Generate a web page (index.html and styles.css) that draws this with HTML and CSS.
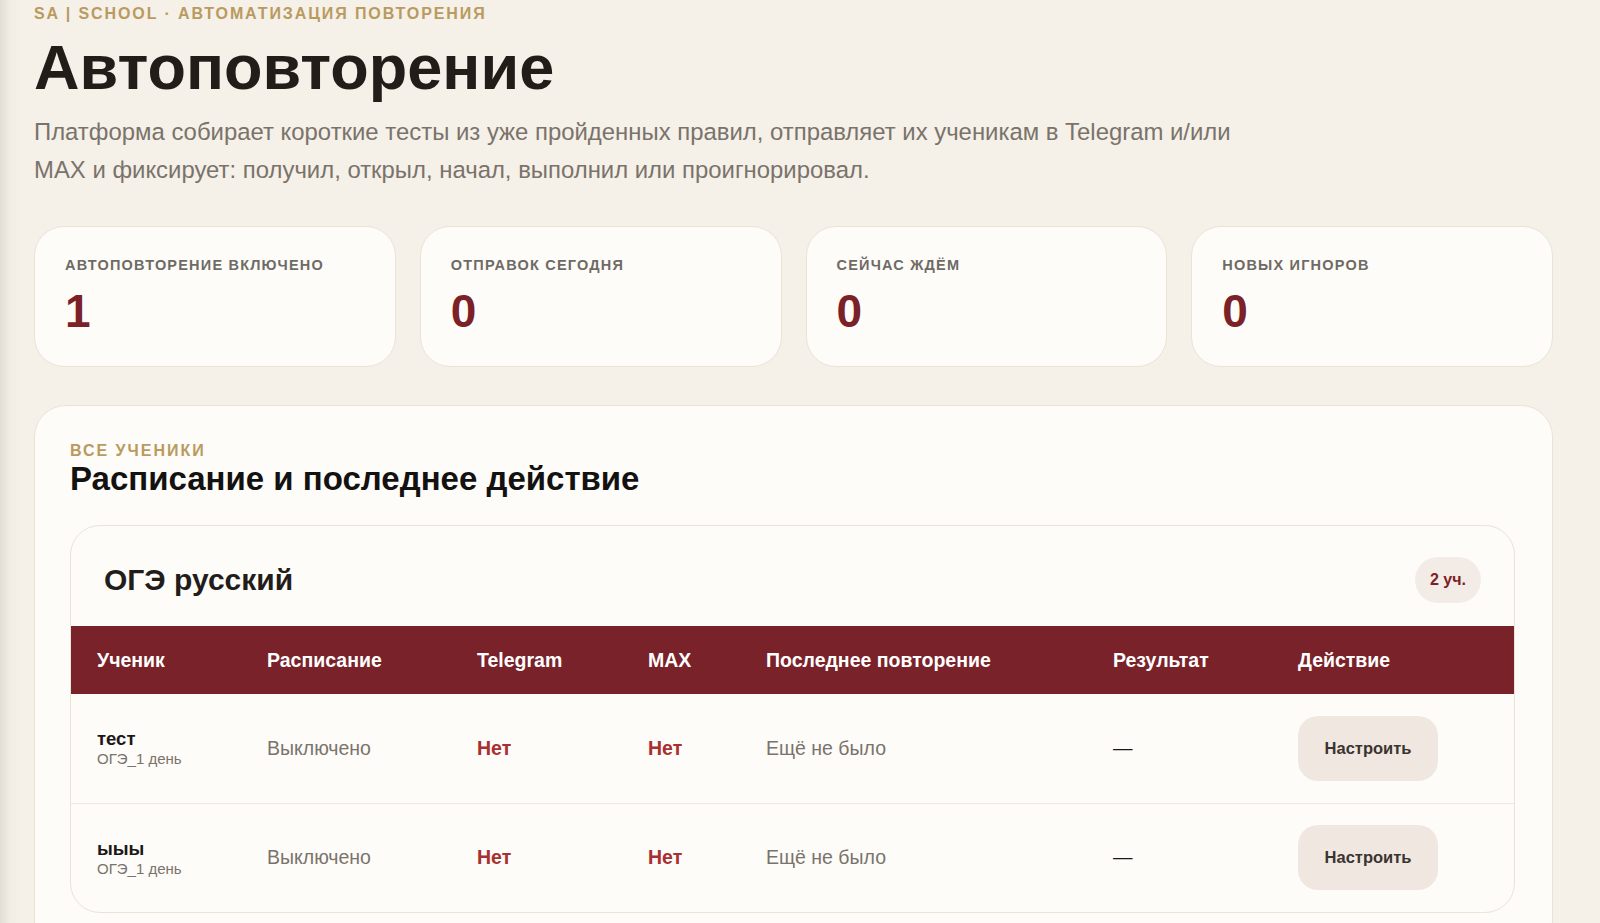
FILE: index.html
```html
<!DOCTYPE html>
<html lang="ru">
<head>
    <meta charset="UTF-8">
    <title>Автоповторение</title>
    <link rel="stylesheet" href="styles.css">
</head>
<body>
    <div class="page">
        <div class="eyebrow">SA | SCHOOL · АВТОМАТИЗАЦИЯ ПОВТОРЕНИЯ</div>
        <h1 class="title">Автоповторение</h1>
        <p class="lead">Платформа собирает короткие тесты из уже пройденных правил, отправляет их ученикам в Telegram и/или MAX и фиксирует: получил, открыл, начал, выполнил или проигнорировал.</p>

        <div class="stats">
            <div class="stat">
                <div class="stat-label">Автоповторение включено</div>
                <div class="stat-value">1</div>
            </div>
            <div class="stat">
                <div class="stat-label">Отправок сегодня</div>
                <div class="stat-value">0</div>
            </div>
            <div class="stat">
                <div class="stat-label">Сейчас ждём</div>
                <div class="stat-value">0</div>
            </div>
            <div class="stat">
                <div class="stat-label">Новых игноров</div>
                <div class="stat-value">0</div>
            </div>
        </div>

        <div class="panel">
            <div class="panel-eyebrow">Все ученики</div>
            <h2 class="panel-title">Расписание и последнее действие</h2>

            <div class="group">
                <div class="group-head">
                    <h3 class="group-title">ОГЭ русский</h3>
                    <span class="badge">2 уч.</span>
                </div>
                <table class="students">
                    <colgroup>
                        <col style="width:170px">
                        <col style="width:210px">
                        <col style="width:171px">
                        <col style="width:118px">
                        <col style="width:347px">
                        <col style="width:185px">
                        <col>
                    </colgroup>
                    <thead>
                        <tr>
                            <th>Ученик</th>
                            <th>Расписание</th>
                            <th>Telegram</th>
                            <th>MAX</th>
                            <th>Последнее повторение</th>
                            <th>Результат</th>
                            <th>Действие</th>
                        </tr>
                    </thead>
                    <tbody>
                        <tr>
                            <td>
                                <div class="student-name">тест</div>
                                <div class="student-group">ОГЭ_1 день</div>
                            </td>
                            <td class="muted">Выключено</td>
                            <td class="no">Нет</td>
                            <td class="no">Нет</td>
                            <td class="muted">Ещё не было</td>
                            <td class="dash">—</td>
                            <td><button class="btn">Настроить</button></td>
                        </tr>
                        <tr>
                            <td>
                                <div class="student-name">ыыы</div>
                                <div class="student-group">ОГЭ_1 день</div>
                            </td>
                            <td class="muted">Выключено</td>
                            <td class="no">Нет</td>
                            <td class="no">Нет</td>
                            <td class="muted">Ещё не было</td>
                            <td class="dash">—</td>
                            <td><button class="btn">Настроить</button></td>
                        </tr>
                    </tbody>
                </table>
            </div>
        </div>
    </div>
</body>
</html>
```

FILE: styles.css
```css
* {
    margin: 0;
    padding: 0;
    box-sizing: border-box;
    font-family: 'Liberation Sans', Arial, sans-serif;
}

body {
    background: linear-gradient(90deg, #e2ddd5 0, #f1ece4 10px, #f5f0e8 22px);
    min-height: 100vh;
    overflow: hidden;
}

.page {
    padding: 4px 47px 40px 34px;
}

.eyebrow {
    color: #b99a5f;
    font-size: 16px;
    line-height: 20px;
    font-weight: bold;
    letter-spacing: 1.9px;
}

.title {
    color: #221d19;
    font-size: 63px;
    line-height: 70px;
    margin-top: 8px;
    letter-spacing: 0;
}

.lead {
    color: #7a736b;
    font-size: 23.9px;
    line-height: 37.5px;
    max-width: 1225px;
    margin-top: 11px;
}

.stats {
    display: grid;
    grid-template-columns: repeat(4, 1fr);
    gap: 24px;
    margin-top: 38px;
}

.stat {
    background: #fdfcf9;
    border: 1px solid #ebe3d7;
    border-radius: 30px;
    height: 141px;
    padding: 29px 30px;
}

.stat-label {
    color: #6f6a64;
    font-size: 14.5px;
    line-height: 18px;
    font-weight: bold;
    letter-spacing: 1.2px;
    text-transform: uppercase;
}

.stat-value {
    color: #7b2128;
    font-size: 46px;
    line-height: 50px;
    font-weight: bold;
    margin-top: 12px;
}

.panel {
    background: #fdfcf9;
    border: 1px solid #ebe3d7;
    border-radius: 32px;
    margin-top: 38px;
    padding: 35px 37px 40px 35px;
}

.panel-eyebrow {
    color: #b99a5f;
    font-size: 16px;
    line-height: 20px;
    font-weight: bold;
    letter-spacing: 2px;
    text-transform: uppercase;
}

.panel-title {
    color: #141210;
    font-size: 33px;
    line-height: 36px;
}

.group {
    border: 1px solid #ebe3d7;
    border-radius: 30px;
    margin-top: 28px;
    overflow: hidden;
}

.group-head {
    height: 100px;
    display: flex;
    align-items: center;
    justify-content: space-between;
    padding: 7px 33px 0 33px;
}

.group-title {
    color: #221d1a;
    font-size: 30px;
}

.badge {
    background: #f3ebe5;
    color: #7b2128;
    font-size: 16px;
    font-weight: bold;
    border-radius: 24px;
    padding: 14px 15px;
}

.students {
    width: 100%;
    border-collapse: collapse;
    table-layout: fixed;
}

.students th {
    background: #7a2229;
    color: #fff;
    font-size: 19.5px;
    font-weight: bold;
    text-align: left;
    height: 68px;
    padding-left: 26px;
}

.students td {
    height: 109px;
    padding-left: 26px;
    font-size: 19.5px;
    border-top: 1px solid #efe9e1;
}

.students tbody tr:first-child td {
    border-top: none;
}

.student-name {
    color: #1b1816;
    font-size: 18.5px;
    font-weight: bold;
    line-height: 22px;
}

.student-group {
    color: #7a736b;
    font-size: 15px;
    line-height: 18px;
}

.muted {
    color: #7a736b;
}

.no {
    color: #a8302f;
    font-weight: bold;
}

.dash {
    color: #1b1816;
}

.btn {
    background: #f0e7e1;
    color: #3a3430;
    border: none;
    border-radius: 20px;
    width: 140px;
    height: 65px;
    font-size: 16.5px;
    font-weight: bold;
    cursor: pointer;
}
```
